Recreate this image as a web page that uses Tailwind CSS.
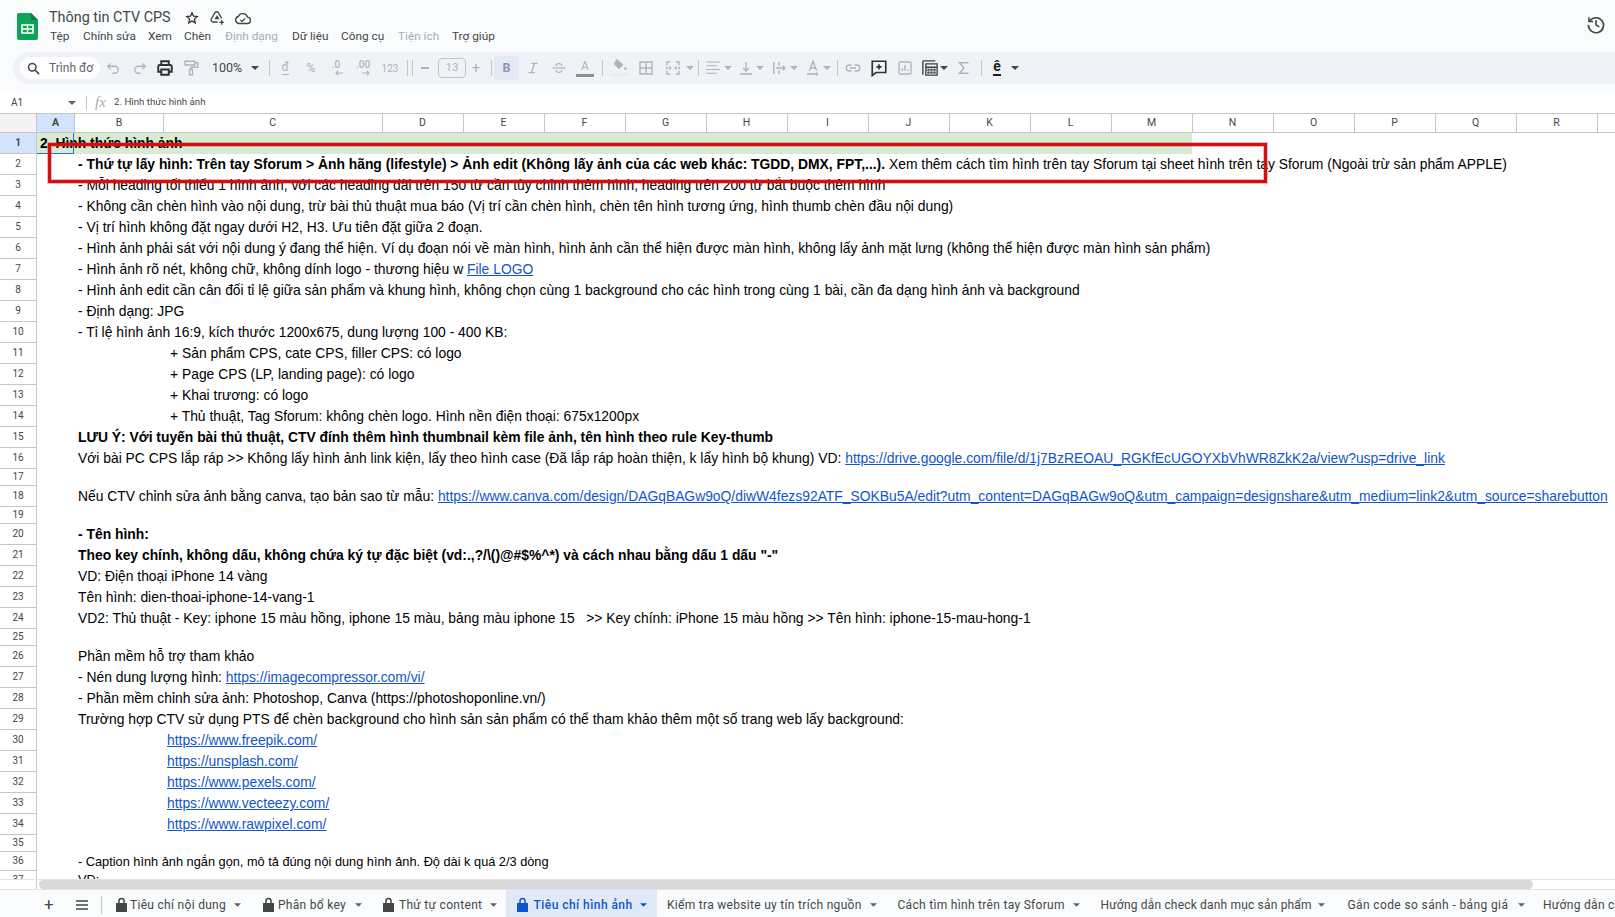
<!DOCTYPE html>
<html lang="vi"><head><meta charset="utf-8"><title>Thông tin CTV CPS</title>
<script src="https://cdn.jsdelivr.net/npm/@tailwindcss/browser@4"></script></head>
<body class="bg-white overflow-hidden font-['Roboto',sans-serif] text-[#444746]">
<div class="relative w-[1615px] h-[917px] overflow-hidden flex flex-col">

<!-- top chrome -->
<div class="h-[92px] bg-[#f9fbfd] shrink-0 flex flex-col">
  <div class="h-[52px] flex relative">
    <svg class="ml-[17px] mt-[13px] shrink-0" width="21" height="27" viewBox="0 0 21 27"><path d="M2 0H14L21 7V25a2 2 0 0 1-2 2H2a2 2 0 0 1-2-2V2a2 2 0 0 1 2-2z" fill="#0fa35a"/><path d="M14 0L21 7H14z" fill="#0b8043"/><path d="M5 12h11v8H5z" fill="none" stroke="#fff" stroke-width="1.6"/><path d="M5 16h11M10.5 12v8" stroke="#fff" stroke-width="1.4"/></svg>
    <div class="ml-[11px] flex flex-col">
      <div class="flex items-center h-[18px] mt-[9px]">
        <span class="text-[14.4px] text-[#444746] w-[121px] whitespace-nowrap shrink-0">Thông tin CTV CPS</span>
        <svg class="ml-[15px] shrink-0" width="14" height="14" viewBox="0 0 24 24" fill="none" stroke="#333" stroke-width="2.200"><path d="M12 3l2.700 6 6.300.6-4.800 4.300 1.400 6.400L12 17l-5.600 3.300 1.400-6.400L3 9.600l6.300-.6z"/></svg>
        <svg class="ml-[10px] shrink-0" width="16" height="16" viewBox="0 0 24 24" fill="none" stroke="#444746" stroke-width="2"><path d="M13 18H6a3 3 0 0 1-2.500-4.500L9 4a3 3 0 0 1 5 0l5 8.500"/><path d="M10 13l2-3.500 2 3.500z"/><path d="M19 15v7M15.500 18.500h7" stroke-width="2"/></svg>
        <svg class="ml-[9px] shrink-0" width="17" height="17" viewBox="0 0 24 24" fill="none" stroke="#444746" stroke-width="2"><path d="M7 19a5 5 0 0 1-1-9.800A7 7 0 0 1 19 10a4.500 4.500 0 0 1-.5 9z"/><path d="M9 14l2.500 2.200L15.500 12" stroke-width="1.800"/></svg>
      </div>
      <div class="flex text-[11.8px] mt-[1px] h-[18px] items-center whitespace-nowrap">
        <span class="ml-[1px] w-[33px] shrink-0">Tệp</span><span class="w-[65px] shrink-0">Chỉnh sửa</span><span class="w-[36px] shrink-0">Xem</span><span class="w-[41px] shrink-0">Chèn</span><span class="w-[67px] shrink-0 text-[#a8adb2]">Định dạng</span><span class="w-[49px] shrink-0">Dữ liệu</span><span class="w-[57px] shrink-0">Công cụ</span><span class="w-[54px] shrink-0 text-[#a8adb2]">Tiện ích</span><span>Trợ giúp</span>
      </div>
    </div>
    <svg class="absolute left-[1586px] top-[14px]" width="20" height="20" viewBox="0 0 24 24" fill="none" stroke="#444746" stroke-width="2"><path d="M4.500 8.500A9 9 0 1 1 3 13"/><path d="M3.500 4v5h5" stroke-width="1.800"/><path d="M12 7.500V13l4 2.500"/></svg>
  </div>
  <div class="h-[32px] bg-[#eff3f8] ml-[13px] rounded-l-[16px] flex items-center pl-[7px] shrink-0 text-[#b0b4b9]">
    <div class="w-[80px] h-[22px] bg-white rounded-full flex items-center shrink-0 pl-[6px] overflow-hidden">
      <svg class="shrink-0" width="15" height="15" viewBox="0 0 24 24" fill="none" stroke="#444746" stroke-width="2.400"><circle cx="10" cy="10" r="6"/><path d="M15 15l6 6"/></svg>
      <span class="ml-[8px] text-[12px] text-[#5f6368] whitespace-nowrap">Trình đơ</span>
    </div>
    <div class="ml-[4px] w-[18px] shrink-0 flex justify-center"><svg width="14" height="14" viewBox="0 0 24 24" fill="none" stroke="#b0b4b9" stroke-width="2.200"><path d="M8 14L3 9l5-5"/><path d="M3 9h12a6 6 0 0 1 0 12h-4"/></svg></div>
    <div class="ml-[9px] w-[18px] shrink-0 flex justify-center"><svg width="14" height="14" viewBox="0 0 24 24" fill="none" stroke="#b0b4b9" stroke-width="2.200"><path d="M16 14l5-5-5-5"/><path d="M21 9H9a6 6 0 0 0 0 12h4"/></svg></div>
    <svg class="ml-[7px] shrink-0" width="18" height="18" viewBox="0 0 24 24" fill="none" stroke="#2f3133" stroke-width="2.600"><path d="M7 8V3h10v5"/><path d="M7 17H3v-7a2 2 0 0 1 2-2h14a2 2 0 0 1 2 2v7h-4"/><path d="M7 14h10v7H7z"/></svg>
    <svg class="ml-[8px] shrink-0" width="18" height="18" viewBox="0 0 24 24" fill="none" stroke="#b0b4b9" stroke-width="1.800"><path d="M4 3h13v5H4z"/><path d="M17 5h4v6h-9v3"/><path d="M10 14h4v7h-4z"/></svg>
    <span class="ml-[12px] w-[30px] shrink-0 text-[12.5px] text-[#444746]">100%</span>
    <svg class="ml-[9px] shrink-0" width="8" height="4" viewBox="0 0 8 4"><path d="M0 0h8L4 4z" fill="#444746"/></svg>
    <div class="ml-[10px] w-px h-[16px] bg-[#c7c7c7] shrink-0"></div>
    <div class="ml-[6px] w-[18px] shrink-0 flex flex-col items-center text-[12px] leading-[13px]"><span>đ</span><span class="w-[7px] h-px bg-[#b0b4b9]"></span></div>
    <span class="ml-[8px] w-[18px] shrink-0 text-center text-[12px]">%</span>
    <div class="ml-[7px] w-[18px] shrink-0 flex flex-col items-center text-[10px] leading-[10px] font-medium"><span>.0</span><svg class="ml-[6px]" width="8" height="6" viewBox="0 0 8 6" fill="none" stroke="#b0b4b9" stroke-width="1.200"><path d="M8 3H1M3 1L1 3l2 2"/></svg></div>
    <div class="ml-[9px] w-[18px] shrink-0 flex flex-col items-center text-[10px] leading-[10px] font-medium"><span>.00</span><svg class="ml-[6px]" width="8" height="6" viewBox="0 0 8 6" fill="none" stroke="#b0b4b9" stroke-width="1.200"><path d="M0 3h7M5 1l2 2-2 2"/></svg></div>
    <span class="ml-[9px] w-[18px] shrink-0 text-center text-[10px]">123</span>
    <div class="ml-[8px] w-px h-[16px] bg-[#c7c7c7] shrink-0"></div>
    <div class="ml-[4px] w-px h-[16px] bg-[#c7c7c7] shrink-0"></div>
    <div class="ml-[3px] w-[18px] shrink-0 flex justify-center"><span class="w-[8px] h-[1.5px] bg-[#b0b4b9]"></span></div>
    <div class="ml-[4px] w-[28px] h-[20px] shrink-0 border border-[#c2c6cb] rounded-[4px] flex items-center justify-center text-[11.5px]">13</div>
    <span class="ml-[1px] w-[18px] shrink-0 text-center text-[15px]">+</span>
    <div class="ml-[6px] w-px h-[16px] bg-[#c7c7c7] shrink-0"></div>
    <div class="ml-[2px] w-[25px] h-[24px] shrink-0 bg-[#e3e9f5] rounded-[4px] flex items-center justify-center text-[12.5px] font-bold text-[#8b99b3]">B</div>
    <div class="ml-[5px] w-[18px] shrink-0 flex justify-center"><svg width="14" height="14" viewBox="0 0 24 24" fill="none" stroke="#b0b4b9" stroke-width="2.400"><path d="M9 4h11M4 20h11M14.500 4l-5 16"/></svg></div>
    <div class="ml-[8px] w-[18px] shrink-0 flex justify-center"><svg width="16" height="16" viewBox="0 0 24 24" fill="none" stroke="#b0b4b9" stroke-width="1.800"><path d="M2 12h20"/><path d="M17 9C16 6.500 14 5.500 12 5.500S7.500 6.500 7.500 9M7.500 15c.5 2.500 2.500 3.500 4.500 3.500s4-1 4.500-3.500"/></svg></div>
    <div class="ml-[8px] w-[18px] shrink-0 text-center text-[12px] leading-[13px] border-b-[3px] border-[#8e8e8e] pb-[1px]">A</div>
    <div class="ml-[8px] w-px h-[16px] bg-[#c7c7c7] shrink-0"></div>
    <div class="ml-[7px] w-[18px] shrink-0 border-b-[3px] border-[#e4f0e2] -mt-[3px]"><svg width="18" height="15" viewBox="0 0 24 20"><path d="M9 1l9 8-6 6-7-7z" fill="#b0b4b9"/><circle cx="20.500" cy="14" r="1.800" fill="#b0b4b9"/></svg></div>
    <svg class="ml-[9px] shrink-0" width="18" height="18" viewBox="0 0 24 24" fill="none" stroke="#b0b4b9" stroke-width="1.800"><path d="M4 4h16v16H4zM12 4v16M4 12h16"/></svg>
    <svg class="ml-[9px] shrink-0" width="18" height="18" viewBox="0 0 24 24" fill="none" stroke="#b0b4b9" stroke-width="1.800"><path d="M8 4H4v4M16 4h4v4M8 20H4v-4M16 20h4v-4M4 10v4M20 10v4M7 10l2 2-2 2M17 10l-2 2 2 2"/></svg>
    <svg class="ml-[4px] shrink-0" width="8" height="4" viewBox="0 0 8 4"><path d="M0 0h8L4 4z" fill="#b0b4b9"/></svg>
    <div class="ml-[4px] w-px h-[16px] bg-[#c7c7c7] shrink-0"></div>
    <svg class="ml-[5px] shrink-0" width="18" height="18" viewBox="0 0 24 24" fill="none" stroke="#b0b4b9" stroke-width="1.600"><path d="M3 4h18M3 9h14M3 14h18M3 19h14"/></svg>
    <svg class="ml-[2px] shrink-0" width="8" height="4" viewBox="0 0 8 4"><path d="M0 0h8L4 4z" fill="#b0b4b9"/></svg>
    <svg class="ml-[5px] shrink-0" width="18" height="18" viewBox="0 0 24 24" fill="none" stroke="#b0b4b9" stroke-width="1.800"><path d="M12 4v12M8 12l4 4 4-4M4 20h16"/></svg>
    <svg class="ml-[1px] shrink-0" width="8" height="4" viewBox="0 0 8 4"><path d="M0 0h8L4 4z" fill="#b0b4b9"/></svg>
    <svg class="ml-[6px] shrink-0" width="18" height="18" viewBox="0 0 24 24" fill="none" stroke="#b0b4b9" stroke-width="1.800"><path d="M5 4v16M12 4v5M12 15v5M8 12h12M17 9l3 3-3 3"/></svg>
    <svg class="ml-[2px] shrink-0" width="8" height="4" viewBox="0 0 8 4"><path d="M0 0h8L4 4z" fill="#b0b4b9"/></svg>
    <svg class="ml-[6px] shrink-0" width="18" height="18" viewBox="0 0 24 24" fill="none" stroke="#b0b4b9" stroke-width="1.800"><path d="M7 16L12 3l5 13M8.500 12h7M4 20h14M16 18l2 2-2 2"/></svg>
    <svg class="ml-[1px] shrink-0" width="8" height="4" viewBox="0 0 8 4"><path d="M0 0h8L4 4z" fill="#b0b4b9"/></svg>
    <div class="ml-[6px] w-px h-[16px] bg-[#c7c7c7] shrink-0"></div>
    <svg class="ml-[6px] shrink-0" width="18" height="18" viewBox="0 0 24 24" fill="none" stroke="#b0b4b9" stroke-width="1.800"><path d="M10 8H7a4 4 0 0 0 0 8h3M14 8h3a4 4 0 0 1 0 8h-3M8 12h8"/></svg>
    <svg class="ml-[8px] shrink-0" width="18" height="18" viewBox="0 0 24 24" fill="none" stroke="#2f3133" stroke-width="2.200"><path d="M3 3h18v15H8l-5 4z"/><path d="M12 7v7M8.500 10.500h7"/></svg>
    <svg class="ml-[8px] shrink-0" width="18" height="18" viewBox="0 0 24 24" fill="none" stroke="#b0b4b9" stroke-width="1.800"><rect x="4" y="4" width="16" height="16" rx="2"/><path d="M8.500 16v-4M12 16V8M15.500 16v-2"/></svg>
    <svg class="ml-[7px] shrink-0" width="18" height="18" viewBox="0 0 24 24" fill="none" stroke="#3c4043" stroke-width="1.800"><path d="M2.500 21V3.500a1 1 0 0 1 1-1H19"/><path d="M6.500 6.500h15v15h-15zM6.500 11h15"/><path d="M8.500 13h11v6.500h-11z" fill="#3c4043" stroke="none"/><path d="M12 13v7M16 13v7M8 16.300h12" stroke="#eff3f8" stroke-width="1"/></svg>
    <svg class="ml-[1px] shrink-0" width="8" height="4" viewBox="0 0 8 4"><path d="M0 0h8L4 4z" fill="#444746"/></svg>
    <svg class="ml-[7px] shrink-0" width="18" height="18" viewBox="0 0 24 24" fill="none" stroke="#b0b4b9" stroke-width="2"><path d="M18 5H6l6 7-6 7h12"/></svg>
    <div class="ml-[8px] w-px h-[16px] bg-[#c7c7c7] shrink-0"></div>
    <div class="ml-[6px] w-[18px] shrink-0 flex flex-col items-center text-[14px] leading-[13px] font-bold text-[#202124]"><span>ê</span><span class="w-[8px] h-[2px] bg-[#202124] mt-[1px]"></span></div>
    <svg class="ml-[5px] shrink-0" width="8" height="4" viewBox="0 0 8 4"><path d="M0 0h8L4 4z" fill="#444746"/></svg>
  </div>
</div>

<!-- formula bar -->
<div class="h-[21px] shrink-0 flex items-center text-[#444746]">
  <span class="ml-[11px] w-[57px] shrink-0 text-[10px]">A1</span>
  <svg class="shrink-0" width="8" height="4" viewBox="0 0 8 4"><path d="M0 0h8L4 4z" fill="#5f6368"/></svg>
  <div class="ml-[10px] w-px h-[14px] bg-[#c7c7c7] shrink-0"></div>
  <span class="ml-[8px] w-[18px] shrink-0 italic text-[15px] text-[#a8adb2] font-['Liberation_Serif']">fx</span>
  <span class="text-[9.7px] ml-px -mt-[1px]">2. Hình thức hình ảnh</span>
</div>

<!-- column header -->
<div class="h-[20px] shrink-0 flex border-y border-[#c7c7c7] text-[10.5px] text-[#444746] box-border">
  <div class="w-[37px] bg-[#f3f3f3] border-r border-[#c7c7c7] shrink-0"></div>
  <div class="w-[38px] shrink-0 bg-[#d3e3fd] font-bold flex items-center justify-center border-r border-[#c7c7c7]">A</div>
  <div class="w-[89px] shrink-0 flex items-center justify-center border-r border-[#c7c7c7]">B</div>
  <div class="w-[218.5px] shrink-0 flex items-center justify-center border-r border-[#c7c7c7]">C</div>
  <div class="w-[81px] shrink-0 flex items-center justify-center border-r border-[#c7c7c7]">D</div>
  <div class="w-[81px] shrink-0 flex items-center justify-center border-r border-[#c7c7c7]">E</div>
  <div class="w-[81px] shrink-0 flex items-center justify-center border-r border-[#c7c7c7]">F</div>
  <div class="w-[81px] shrink-0 flex items-center justify-center border-r border-[#c7c7c7]">G</div>
  <div class="w-[81px] shrink-0 flex items-center justify-center border-r border-[#c7c7c7]">H</div>
  <div class="w-[81px] shrink-0 flex items-center justify-center border-r border-[#c7c7c7]">I</div>
  <div class="w-[81px] shrink-0 flex items-center justify-center border-r border-[#c7c7c7]">J</div>
  <div class="w-[81px] shrink-0 flex items-center justify-center border-r border-[#c7c7c7]">K</div>
  <div class="w-[81px] shrink-0 flex items-center justify-center border-r border-[#c7c7c7]">L</div>
  <div class="w-[81px] shrink-0 flex items-center justify-center border-r border-[#c7c7c7]">M</div>
  <div class="w-[81px] shrink-0 flex items-center justify-center border-r border-[#c7c7c7]">N</div>
  <div class="w-[81px] shrink-0 flex items-center justify-center border-r border-[#c7c7c7]">O</div>
  <div class="w-[81px] shrink-0 flex items-center justify-center border-r border-[#c7c7c7]">P</div>
  <div class="w-[81px] shrink-0 flex items-center justify-center border-r border-[#c7c7c7]">Q</div>
  <div class="w-[81px] shrink-0 flex items-center justify-center border-r border-[#c7c7c7]">R</div>
</div>

<!-- grid body -->
<div class="h-[746px] shrink-0 overflow-hidden font-['Liberation_Sans',sans-serif] text-[13.87px] leading-[20px] text-black whitespace-nowrap">
  <div class="flex h-[21px]"><div class="w-[37px] shrink-0 bg-[#d3e3fd] border-b border-r border-[#c7c7c7] flex items-center justify-center text-[10px] font-bold text-[#444746] font-['Roboto']">1</div><div class="relative w-[1155px] bg-[#d9ead3] pl-[3px] font-bold"><div class="absolute left-0 top-0 w-[37px] h-[21px] border-r border-b border-[#1a73e8]"></div>2. Hình thức hình ảnh</div></div>
  <div class="flex h-[21px]"><div class="w-[37px] shrink-0 border-b border-r border-[#c7c7c7] flex items-center justify-center text-[10px] text-[#444746] font-['Roboto']">2</div><div class="pl-[41px]"><b>- Thứ tự lấy hình: Trên tay Sforum &gt; Ảnh hãng (lifestyle) &gt; Ảnh edit (Không lấy ảnh của các web khác: TGDD, DMX, FPT,...).</b> Xem thêm cách tìm hình trên tay Sforum tại sheet hình trên tay Sforum (Ngoài trừ sản phẩm APPLE)</div></div>
  <div class="flex h-[21px]"><div class="w-[37px] shrink-0 border-b border-r border-[#c7c7c7] flex items-center justify-center text-[10px] text-[#444746] font-['Roboto']">3</div><div class="pl-[41px]">- Mỗi heading tối thiểu 1 hình ảnh, với các heading dài trên 150 từ cần tùy chỉnh thêm hình, heading trên 200 từ bắt buộc thêm hình</div></div>
  <div class="flex h-[21px]"><div class="w-[37px] shrink-0 border-b border-r border-[#c7c7c7] flex items-center justify-center text-[10px] text-[#444746] font-['Roboto']">4</div><div class="pl-[41px]">- Không cần chèn hình vào nội dung, trừ bài thủ thuật mua báo (Vị trí cần chèn hình, chèn tên hình tương ứng, hình thumb chèn đầu nội dung)</div></div>
  <div class="flex h-[21px]"><div class="w-[37px] shrink-0 border-b border-r border-[#c7c7c7] flex items-center justify-center text-[10px] text-[#444746] font-['Roboto']">5</div><div class="pl-[41px]">- Vị trí hình không đặt ngay dưới H2, H3. Ưu tiên đặt giữa 2 đoạn.</div></div>
  <div class="flex h-[21px]"><div class="w-[37px] shrink-0 border-b border-r border-[#c7c7c7] flex items-center justify-center text-[10px] text-[#444746] font-['Roboto']">6</div><div class="pl-[41px]">- Hình ảnh phải sát với nội dung ý đang thể hiện. Ví dụ đoạn nói về màn hình, hình ảnh cần thể hiện được màn hình, không lấy ảnh mặt lưng (không thể hiện được màn hình sản phẩm)</div></div>
  <div class="flex h-[21px]"><div class="w-[37px] shrink-0 border-b border-r border-[#c7c7c7] flex items-center justify-center text-[10px] text-[#444746] font-['Roboto']">7</div><div class="pl-[41px]">- Hình ảnh rõ nét, không chữ, không dính logo - thương hiệu w <a class="text-[#1155cc] underline">File LOGO</a></div></div>
  <div class="flex h-[21px]"><div class="w-[37px] shrink-0 border-b border-r border-[#c7c7c7] flex items-center justify-center text-[10px] text-[#444746] font-['Roboto']">8</div><div class="pl-[41px]">- Hình ảnh edit cần cân đối tỉ lệ giữa sản phẩm và khung hình, không chọn cùng 1 background cho các hình trong cùng 1 bài, cần đa dạng hình ảnh và background</div></div>
  <div class="flex h-[21px]"><div class="w-[37px] shrink-0 border-b border-r border-[#c7c7c7] flex items-center justify-center text-[10px] text-[#444746] font-['Roboto']">9</div><div class="pl-[41px]">- Định dạng: JPG</div></div>
  <div class="flex h-[21px]"><div class="w-[37px] shrink-0 border-b border-r border-[#c7c7c7] flex items-center justify-center text-[10px] text-[#444746] font-['Roboto']">10</div><div class="pl-[41px]">- Tỉ lệ hình ảnh 16:9, kích thước 1200x675, dung lượng 100 - 400 KB:</div></div>
  <div class="flex h-[21px]"><div class="w-[37px] shrink-0 border-b border-r border-[#c7c7c7] flex items-center justify-center text-[10px] text-[#444746] font-['Roboto']">11</div><div class="pl-[133px]">+ Sản phẩm CPS, cate CPS, filler CPS: có logo</div></div>
  <div class="flex h-[21px]"><div class="w-[37px] shrink-0 border-b border-r border-[#c7c7c7] flex items-center justify-center text-[10px] text-[#444746] font-['Roboto']">12</div><div class="pl-[133px]">+ Page CPS (LP, landing page): có logo</div></div>
  <div class="flex h-[21px]"><div class="w-[37px] shrink-0 border-b border-r border-[#c7c7c7] flex items-center justify-center text-[10px] text-[#444746] font-['Roboto']">13</div><div class="pl-[133px]">+ Khai trương: có logo</div></div>
  <div class="flex h-[21px]"><div class="w-[37px] shrink-0 border-b border-r border-[#c7c7c7] flex items-center justify-center text-[10px] text-[#444746] font-['Roboto']">14</div><div class="pl-[133px]">+ Thủ thuật, Tag Sforum: không chèn logo. Hình nền điện thoại: 675x1200px</div></div>
  <div class="flex h-[21px]"><div class="w-[37px] shrink-0 border-b border-r border-[#c7c7c7] flex items-center justify-center text-[10px] text-[#444746] font-['Roboto']">15</div><div class="pl-[41px] font-bold">LƯU Ý: Với tuyến bài thủ thuật, CTV đính thêm hình thumbnail kèm file ảnh, tên hình theo rule Key-thumb</div></div>
  <div class="flex h-[21px]"><div class="w-[37px] shrink-0 border-b border-r border-[#c7c7c7] flex items-center justify-center text-[10px] text-[#444746] font-['Roboto']">16</div><div class="pl-[41px]">Với bài PC CPS lắp ráp &gt;&gt; Không lấy hình ảnh link kiện, lấy theo hình case (Đã lắp ráp hoàn thiện, k lấy hình bộ khung) VD: <a class="text-[#1155cc] underline">https://drive.google.com/file/d/1j7BzREOAU_RGKfEcUGOYXbVhWR8ZkK2a/view?usp=drive_link</a></div></div>
  <div class="flex h-[17px]"><div class="w-[37px] shrink-0 border-b border-r border-[#c7c7c7] flex items-center justify-center text-[10px] text-[#444746] font-['Roboto']">17</div></div>
  <div class="flex h-[21px]"><div class="w-[37px] shrink-0 border-b border-r border-[#c7c7c7] flex items-center justify-center text-[10px] text-[#444746] font-['Roboto']">18</div><div class="pl-[41px]">Nếu CTV chỉnh sửa ảnh bằng canva, tạo bản sao từ mẫu: <a class="text-[#1155cc] underline">https://www.canva.com/design/DAGqBAGw9oQ/diwW4fezs92ATF_SOKBu5A/edit?utm_content=DAGqBAGw9oQ&amp;utm_campaign=designshare&amp;utm_medium=link2&amp;utm_source=sharebutton</a></div></div>
  <div class="flex h-[17px]"><div class="w-[37px] shrink-0 border-b border-r border-[#c7c7c7] flex items-center justify-center text-[10px] text-[#444746] font-['Roboto']">19</div></div>
  <div class="flex h-[21px]"><div class="w-[37px] shrink-0 border-b border-r border-[#c7c7c7] flex items-center justify-center text-[10px] text-[#444746] font-['Roboto']">20</div><div class="pl-[41px] font-bold">- Tên hình:</div></div>
  <div class="flex h-[21px]"><div class="w-[37px] shrink-0 border-b border-r border-[#c7c7c7] flex items-center justify-center text-[10px] text-[#444746] font-['Roboto']">21</div><div class="pl-[41px] font-bold">Theo key chính, không dấu, không chứa ký tự đặc biệt (vd:.,?/\()@#$%^*) và cách nhau bằng dấu 1 dấu "-"</div></div>
  <div class="flex h-[21px]"><div class="w-[37px] shrink-0 border-b border-r border-[#c7c7c7] flex items-center justify-center text-[10px] text-[#444746] font-['Roboto']">22</div><div class="pl-[41px]">VD: Điện thoại iPhone 14 vàng</div></div>
  <div class="flex h-[21px]"><div class="w-[37px] shrink-0 border-b border-r border-[#c7c7c7] flex items-center justify-center text-[10px] text-[#444746] font-['Roboto']">23</div><div class="pl-[41px]">Tên hình: dien-thoai-iphone-14-vang-1</div></div>
  <div class="flex h-[21px]"><div class="w-[37px] shrink-0 border-b border-r border-[#c7c7c7] flex items-center justify-center text-[10px] text-[#444746] font-['Roboto']">24</div><div class="pl-[41px] whitespace-pre">VD2: Thủ thuật - Key: iphone 15 màu hồng, iphone 15 màu, bảng màu iphone 15   &gt;&gt; Key chính: iPhone 15 màu hồng &gt;&gt; Tên hình: iphone-15-mau-hong-1</div></div>
  <div class="flex h-[17px]"><div class="w-[37px] shrink-0 border-b border-r border-[#c7c7c7] flex items-center justify-center text-[10px] text-[#444746] font-['Roboto']">25</div></div>
  <div class="flex h-[21px]"><div class="w-[37px] shrink-0 border-b border-r border-[#c7c7c7] flex items-center justify-center text-[10px] text-[#444746] font-['Roboto']">26</div><div class="pl-[41px]">Phần mềm hỗ trợ tham khảo</div></div>
  <div class="flex h-[21px]"><div class="w-[37px] shrink-0 border-b border-r border-[#c7c7c7] flex items-center justify-center text-[10px] text-[#444746] font-['Roboto']">27</div><div class="pl-[41px]">- Nén dung lượng hình: <a class="text-[#1155cc] underline">https://imagecompressor.com/vi/</a></div></div>
  <div class="flex h-[21px]"><div class="w-[37px] shrink-0 border-b border-r border-[#c7c7c7] flex items-center justify-center text-[10px] text-[#444746] font-['Roboto']">28</div><div class="pl-[41px]">- Phần mềm chỉnh sửa ảnh: Photoshop, Canva (https://photoshoponline.vn/)</div></div>
  <div class="flex h-[21px]"><div class="w-[37px] shrink-0 border-b border-r border-[#c7c7c7] flex items-center justify-center text-[10px] text-[#444746] font-['Roboto']">29</div><div class="pl-[41px]">Trường hợp CTV sử dụng PTS để chèn background cho hình sản sản phẩm có thể tham khảo thêm một số trang web lấy background:</div></div>
  <div class="flex h-[21px]"><div class="w-[37px] shrink-0 border-b border-r border-[#c7c7c7] flex items-center justify-center text-[10px] text-[#444746] font-['Roboto']">30</div><div class="pl-[130px]"><a class="text-[#1155cc] underline">https://www.freepik.com/</a></div></div>
  <div class="flex h-[21px]"><div class="w-[37px] shrink-0 border-b border-r border-[#c7c7c7] flex items-center justify-center text-[10px] text-[#444746] font-['Roboto']">31</div><div class="pl-[130px]"><a class="text-[#1155cc] underline">https://unsplash.com/</a></div></div>
  <div class="flex h-[21px]"><div class="w-[37px] shrink-0 border-b border-r border-[#c7c7c7] flex items-center justify-center text-[10px] text-[#444746] font-['Roboto']">32</div><div class="pl-[130px]"><a class="text-[#1155cc] underline">https://www.pexels.com/</a></div></div>
  <div class="flex h-[21px]"><div class="w-[37px] shrink-0 border-b border-r border-[#c7c7c7] flex items-center justify-center text-[10px] text-[#444746] font-['Roboto']">33</div><div class="pl-[130px]"><a class="text-[#1155cc] underline">https://www.vecteezy.com/</a></div></div>
  <div class="flex h-[21px]"><div class="w-[37px] shrink-0 border-b border-r border-[#c7c7c7] flex items-center justify-center text-[10px] text-[#444746] font-['Roboto']">34</div><div class="pl-[130px]"><a class="text-[#1155cc] underline">https://www.rawpixel.com/</a></div></div>
  <div class="flex h-[17px]"><div class="w-[37px] shrink-0 border-b border-r border-[#c7c7c7] flex items-center justify-center text-[10px] text-[#444746] font-['Roboto']">35</div></div>
  <div class="flex h-[19px]"><div class="w-[37px] shrink-0 border-b border-r border-[#c7c7c7] flex items-center justify-center text-[10px] text-[#444746] font-['Roboto']">36</div><div class="pl-[41px] text-[12.78px] leading-[20px]">- Caption hình ảnh ngắn gọn, mô tả đúng nội dung hình ảnh. Độ dài k quá 2/3 dòng</div></div>
  <div class="flex h-[19px]"><div class="w-[37px] shrink-0 border-b border-r border-[#c7c7c7] flex items-center justify-center text-[10px] text-[#444746] font-['Roboto']">37</div><div class="pl-[41px] text-[12.78px] leading-[18px]">VD:</div></div>
</div>

<!-- scrollbar -->
<div class="h-[11px] shrink-0 border-y border-[#e3e3e3] flex box-border">
  <div class="w-[37px] border-r border-[#c7c7c7]"></div>
  <div class="ml-[2px] w-[1494px] h-[9px] bg-[#d9d9d9] rounded-full"></div>
</div>

<!-- tabs -->
<div class="h-[27px] shrink-0 bg-[#f9fbfd] flex items-center pt-[2px] text-[12px] tracking-[0.3px] whitespace-nowrap text-[#444746] overflow-hidden">
  <span class="ml-[44px] w-[10px] shrink-0 text-[17px] leading-none">+</span>
  <svg class="ml-[22px] shrink-0" width="12" height="10" viewBox="0 0 12 10"><path d="M0 1h12M0 5h12M0 9h12" stroke="#444746" stroke-width="1.500"/></svg>
  <div class="ml-[13px] w-px h-[18px] bg-[#c7c7c7] shrink-0"></div>
  <svg class="ml-[14px] shrink-0" width="11" height="15" viewBox="0 0 11 15"><path d="M3 6V4a2.500 2.500 0 0 1 5 0v2" fill="none" stroke="#444746" stroke-width="1.500"/><path d="M0 6h11v9H0z" fill="#444746"/></svg>
  <span class="ml-[3px] w-[94px] shrink-0">Tiêu chí nội dung</span>
  <svg class="ml-[10px] shrink-0" width="7" height="4" viewBox="0 0 8 4"><path d="M0 0h8L4 4z" fill="#5f6368"/></svg>
  <svg class="ml-[21.5px] shrink-0" width="11" height="15" viewBox="0 0 11 15"><path d="M3 6V4a2.500 2.500 0 0 1 5 0v2" fill="none" stroke="#444746" stroke-width="1.500"/><path d="M0 6h11v9H0z" fill="#444746"/></svg>
  <span class="ml-[4.5px] w-[67px] shrink-0">Phân bổ key</span>
  <svg class="ml-[9.5px] shrink-0" width="7" height="4" viewBox="0 0 8 4"><path d="M0 0h8L4 4z" fill="#5f6368"/></svg>
  <svg class="ml-[21.5px] shrink-0" width="11" height="15" viewBox="0 0 11 15"><path d="M3 6V4a2.500 2.500 0 0 1 5 0v2" fill="none" stroke="#444746" stroke-width="1.500"/><path d="M0 6h11v9H0z" fill="#444746"/></svg>
  <span class="ml-[5px] w-[81px] shrink-0">Thứ tự content</span>
  <svg class="ml-[10px] shrink-0" width="7" height="4" viewBox="0 0 8 4"><path d="M0 0h8L4 4z" fill="#5f6368"/></svg>
  <div class="ml-[9px] w-[151px] shrink-0 h-[27px] -mt-[2px] pt-[2px] bg-[#e1e9f7] flex items-center pl-[11px] text-[#0b57d0] font-medium">
    <svg class="shrink-0" width="11" height="15" viewBox="0 0 11 15"><path d="M3 6V4a2.500 2.500 0 0 1 5 0v2" fill="none" stroke="#0b57d0" stroke-width="1.500"/><path d="M0 6h11v9H0z" fill="#0b57d0"/></svg>
    <span class="ml-[5.5px] w-[97.5px] shrink-0 tracking-[0.45px]">Tiêu chí hình ảnh</span>
    <svg class="ml-[8.5px] shrink-0" width="7" height="4" viewBox="0 0 8 4"><path d="M0 0h8L4 4z" fill="#0b57d0"/></svg>
  </div>
  <span class="ml-[10px] w-[194px] shrink-0">Kiểm tra website uy tín trích nguồn</span>
  <svg class="ml-[9px] shrink-0" width="7" height="4" viewBox="0 0 8 4"><path d="M0 0h8L4 4z" fill="#5f6368"/></svg>
  <span class="ml-[20.5px] w-[166px] shrink-0">Cách tìm hình trên tay Sforum</span>
  <svg class="ml-[9px] shrink-0" width="7" height="4" viewBox="0 0 8 4"><path d="M0 0h8L4 4z" fill="#5f6368"/></svg>
  <span class="ml-[21px] w-[208px] shrink-0 tracking-[0.18px]">Hướng dẫn check danh mục sản phẩm</span>
  <svg class="ml-[9px] shrink-0" width="7" height="4" viewBox="0 0 8 4"><path d="M0 0h8L4 4z" fill="#5f6368"/></svg>
  <span class="ml-[23px] w-[161px] shrink-0 tracking-[0.38px]">Gắn code so sánh - bảng giá</span>
  <svg class="ml-[9px] shrink-0" width="7" height="4" viewBox="0 0 8 4"><path d="M0 0h8L4 4z" fill="#5f6368"/></svg>
  <span class="ml-[18.5px] shrink-0">Hướng dẫn check</span>
</div>

<!-- red annotation -->
<div class="absolute left-[48px] top-[143px] w-[1219px] h-[40px] border-[3px] border-[#d40f12] shadow-[0_0_0_1px_rgba(212,15,18,0.3),inset_0_0_0_1px_rgba(212,15,18,0.3)] pointer-events-none"></div>
</div>
</body></html>
